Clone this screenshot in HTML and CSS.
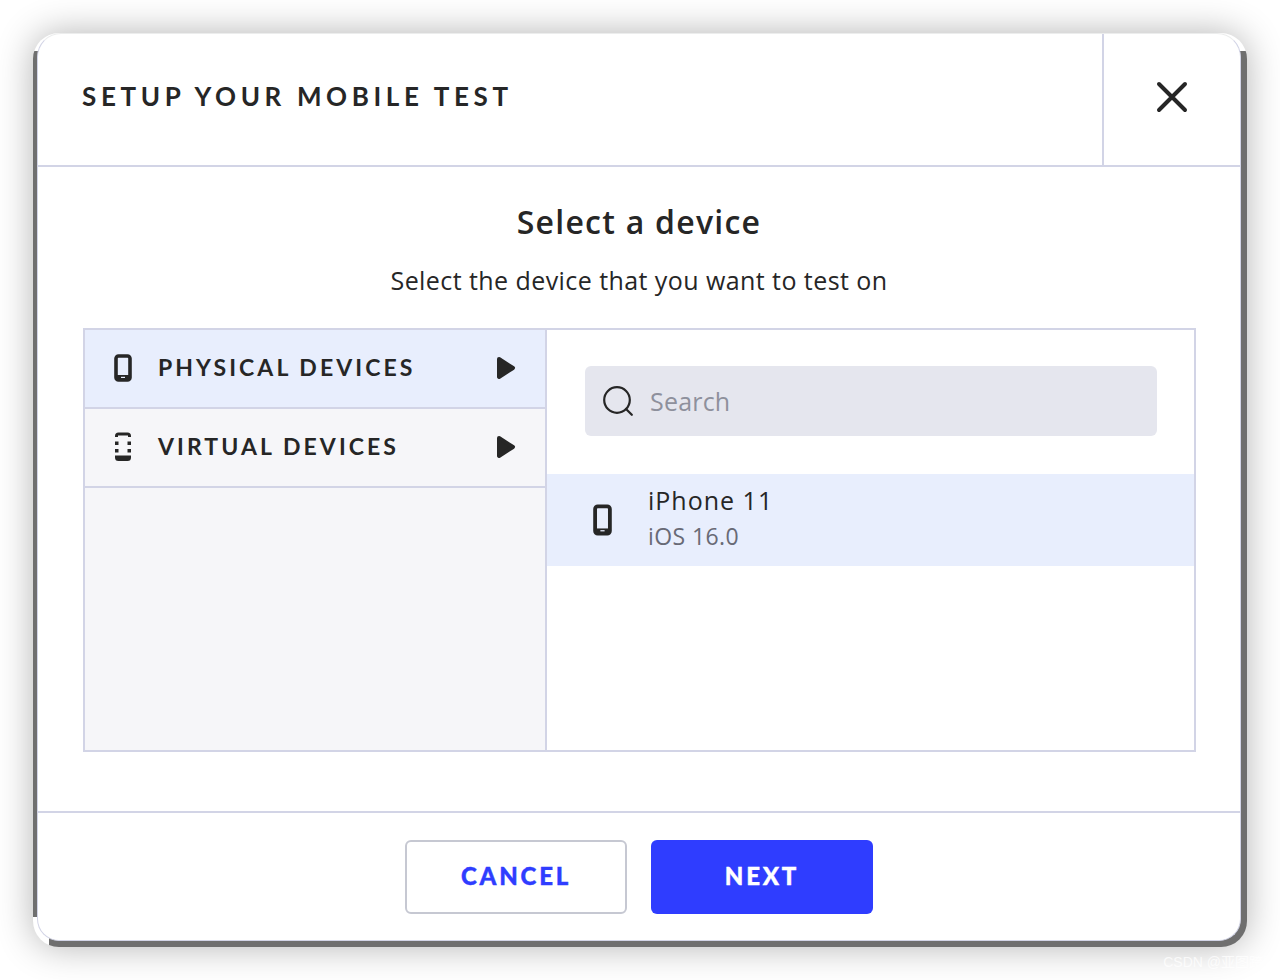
FILE: index.html
```html
<!DOCTYPE html>
<html lang="en">
<head>
<meta charset="utf-8">
<title>Setup your mobile test</title>
<link rel="stylesheet" href="styles.css">
</head>
<body>
<div class="window">
  <div class="dialog">
    <header class="head">
      <h1 class="title">SETUP YOUR MOBILE TEST</h1>
      <div class="close">
        <svg width="32" height="32" viewBox="0 0 32 32"><path d="M3 3 L29 29 M29 3 L3 29" fill="none" stroke="#262626" stroke-width="4" stroke-linecap="round"/></svg>
      </div>
    </header>
    <main class="body">
      <h2 class="heading">Select a device</h2>
      <p class="sub">Select the device that you want to test on</p>
      <div class="panel">
        <div class="left">
          <div class="cat active">
            <svg class="cat-icon" width="18" height="28" viewBox="0 0 18 28"><rect x="2" y="2" width="14" height="24" rx="2.5" fill="none" stroke="#262626" stroke-width="3.600"/><path d="M2 21h14v5H2z" fill="#262626"/><path d="M7 23.4h4" stroke="#e8eefd" stroke-width="1.2"/></svg>
            <span class="cat-label">PHYSICAL DEVICES</span>
            <svg class="arrow" width="20" height="24" viewBox="0 0 20 24"><path d="M3 3 L17 12 L3 21 Z" fill="#262626" stroke="#262626" stroke-width="4" stroke-linejoin="round"/></svg>
          </div>
          <div class="cat">
            <svg class="cat-icon" width="18" height="29" viewBox="0 0 18 29"><path d="M1 5V4a3.500 3.500 0 0 1 3.500-3.500h9A3.500 3.500 0 0 1 17 4v1h-3V3.500H4V5z" fill="#262626"/><path d="M1 23.500h16v2a3.500 3.500 0 0 1-3.500 3.500h-9A3.500 3.500 0 0 1 1 25.500z" fill="#262626"/><path d="M1 9.500h3.500v3.500H1zM13.500 9.500h3.500v3.500h-3.500zM1 17h3.500v3.500H1zM13.500 17h3.500v3.500h-3.500z" fill="#262626"/></svg>
            <span class="cat-label">VIRTUAL DEVICES</span>
            <svg class="arrow" width="20" height="24" viewBox="0 0 20 24"><path d="M3 3 L17 12 L3 21 Z" fill="#262626" stroke="#262626" stroke-width="4" stroke-linejoin="round"/></svg>
          </div>
        </div>
        <div class="right">
          <div class="search-wrap">
            <div class="search">
              <svg width="30" height="30" viewBox="0 0 30 30"><circle cx="14" cy="14" r="12.8" fill="none" stroke="#262626" stroke-width="2.2"/><path d="M23 23 L28.800 28.800" stroke="#262626" stroke-width="2.2" stroke-linecap="round"/></svg>
              <span class="placeholder">Search</span>
            </div>
          </div>
          <div class="device">
            <svg class="device-icon" width="19" height="32" viewBox="0 0 18 30"><rect x="2" y="2" width="14" height="26" rx="2.5" fill="none" stroke="#262626" stroke-width="3.600"/><path d="M2 23h14v5H2z" fill="#262626"/><path d="M7 25.2h4" stroke="#e8eefd" stroke-width="1.2"/></svg>
            <div class="device-text">
              <div class="device-name">iPhone 11</div>
              <div class="device-os">iOS 16.0</div>
            </div>
          </div>
        </div>
      </div>
    </main>
    <footer class="foot">
      <button class="btn cancel">CANCEL</button>
      <button class="btn next">NEXT</button>
    </footer>
  </div>
</div>
<div class="mark">CSDN @亚图跨际</div>
</body>
</html>
```

FILE: styles.css
```css
* { box-sizing: border-box; }
html, body { margin: 0; height: 980px; background: #fff; overflow: hidden; }
body { padding: 33px 33px 33px; font-family: "Lato", "Noto Sans CJK SC", sans-serif; color: #262626; position: relative; }
.window {
  width: 1214px; height: 914px; border-radius: 26px;
  background:
    linear-gradient(#fff, #fff) left bottom / 16px 30px no-repeat,
    linear-gradient(#fff, #fff) top / 100% 18px no-repeat,
    #6f6f6f;
  padding: 0 6px 6px 4px;
  box-shadow: 0 0 36px rgba(0,0,0,.3);
}
.dialog {
  height: 100%; background: #fff; border-radius: 24px 24px 22px 22px;
  border: 1px solid #d2d4e6; border-top-color: #eceded; display: flex; flex-direction: column; overflow: hidden;
}
.head { height: 133px; flex: none; display: flex; border-bottom: 2px solid #d2d4e6; }
.title { flex: 1; margin: 0; padding-left: 44px; font-size: 26px; font-weight: 700; letter-spacing: 4.64px; line-height: 124px; }
.close { width: 138px; border-left: 2px solid #d2d4e6; display: flex; align-items: center; justify-content: center; padding-bottom: 6px; }
.body { flex: 1; padding: 0 45px; display: flex; flex-direction: column; }
.heading { margin: 35px 0 0; font: 600 32px/40px "Open Sans", sans-serif; text-align: center; letter-spacing: 1.25px; }
.sub { margin: 22px 0 0; font: 400 25px/32px "Open Sans", sans-serif; text-align: center; letter-spacing: .43px; }
.panel { margin: 32px -1px 0 0; height: 424px; display: flex; border: 2px solid #d2d4e6; }
.left { width: 462px; flex: none; background: #f6f6f9; border-right: 2px solid #d2d4e6; }
.cat { height: 79px; padding: 0 29px 2px 29px; display: flex; align-items: center; border-bottom: 2px solid #d2d4e6; }
.cat.active { background: #e8eefd; }
.cat-icon { flex: none; }
.cat-label { flex: 1; margin: -2px 0 0 26px; font-size: 23px; font-weight: 700; letter-spacing: 3.07px; }
.right { flex: 1; background: #fff; }
.search-wrap { padding: 36px 37px 38px 38px; }
.search { height: 70px; background: #e5e6ee; border-radius: 6px; display: flex; align-items: center; padding-left: 18px; }
.placeholder { margin-left: 17px; font: 400 25px "Open Sans", sans-serif; letter-spacing: .2px; color: #8e909c; }
.device { height: 92px; background: #e8eefd; display: flex; align-items: center; padding-left: 46px; }
.device-icon { flex: none; }
.device-text { margin: -7px 0 0 36px; }
.device-name { font: 400 25px/34px "Open Sans", sans-serif; letter-spacing: 1px; }
.device-os { margin-top: 4px; font: 400 23px/30px "Open Sans", sans-serif; letter-spacing: .4px; color: #686a76; }
.foot { height: 129px; flex: none; border-top: 2px solid #d2d4e6; display: flex; justify-content: center; gap: 24px; padding-top: 27px; }
.btn { width: 222px; height: 74px; border-radius: 6px; padding: 0 0 3px; font: 900 24px "Lato", sans-serif; letter-spacing: 2.8px; -webkit-text-stroke: .4px currentColor; }
.cancel { background: #fff; color: #2f3dff; border: 2px solid #c6c8d2; }
.next { background: #2f3dff; color: #fff; border: 0; }
.mark { position: absolute; right: 3px; bottom: 9px; font: 14px "Liberation Sans", "Noto Sans CJK SC", sans-serif; color: rgba(255,255,255,.75); }
```
